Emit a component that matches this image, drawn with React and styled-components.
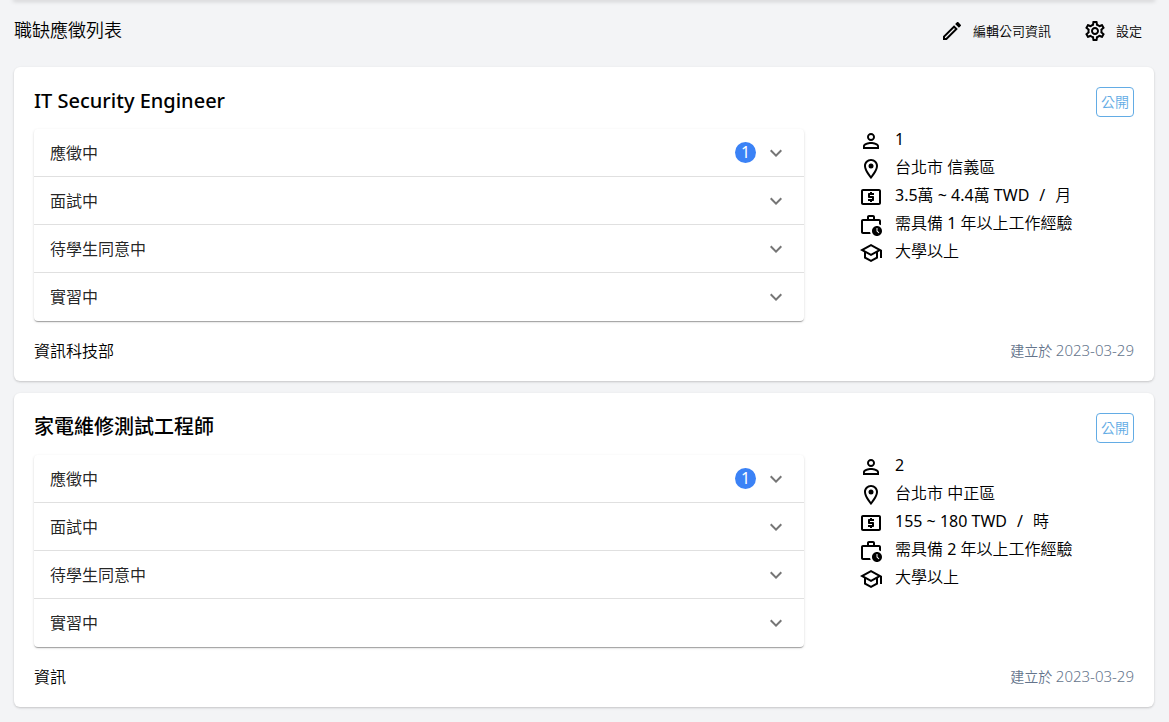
import React from "react";
import styled, { createGlobalStyle } from "styled-components";
import {
  MdOutlineEdit,
  MdOutlineSettings,
  MdOutlinePersonOutline,
  MdOutlineLocationOn,
  MdOutlineLocalAtm,
  MdOutlineWorkHistory,
  MdOutlineSchool,
  MdExpandMore,
} from "react-icons/md";

const GlobalStyle = createGlobalStyle`
  * {
    box-sizing: border-box;
  }
  body {
    margin: 0;
    background: #f3f4f6;
    color: #000;
    font-family: "Noto Sans", "Noto Sans CJK TC", sans-serif;
    font-size: 16px;
    font-weight: 350;
    line-height: 24px;
  }
  h1, h2, p, ul {
    margin: 0;
    padding: 0;
  }
  button {
    border: 0;
    background: none;
    color: inherit;
    font: inherit;
    cursor: pointer;
  }
`;

const Page = styled.main`
  padding: 0 15px 15px 14px;
`;

const NavEdge = styled.div`
  height: 0;
  box-shadow: 0 0 4px 1px rgba(0, 0, 0, 0.25);
`;

const PageHeader = styled.header`
  display: flex;
  align-items: center;
  justify-content: space-between;
  height: 60px;
  margin-bottom: 7px;
  padding-right: 12px;
`;

const PageTitle = styled.h1`
  font-size: 18px;
  font-weight: 350;
`;

const Actions = styled.div`
  display: flex;
  gap: 32px;
`;

const ActionButton = styled.button`
  display: flex;
  align-items: center;
  gap: 9px;
  padding: 2px 0 0;
  font-size: 13px;
`;

const JobList = styled.div`
  display: grid;
  gap: 12px;
`;

const JobCard = styled.article`
  padding: 20px;
  border-radius: 6px;
  background: #fff;
  box-shadow: 0 1px 3px rgba(0, 0, 0, 0.1), 0 1px 2px rgba(0, 0, 0, 0.1);
`;

const JobHeader = styled.div`
  display: flex;
  align-items: flex-start;
  justify-content: space-between;
  margin-bottom: 12px;
`;

const JobTitle = styled.h2`
  font-size: 20px;
  font-weight: 500;
  line-height: 28px;
`;

const StatusButton = styled.button`
  height: 30px;
  padding: 0 4px;
  border: 1px solid #63ace5;
  border-radius: 4px;
  color: #63ace5;
  font-size: 14px;
  line-height: 28px;
`;

const JobBody = styled.div`
  display: grid;
  grid-template-columns: 70% 25%;
  justify-content: space-between;
  align-items: start;
`;

const StageList = styled.div`
  border-radius: 4px;
  background: #fff;
  box-shadow: 0 2px 1px -1px rgba(0, 0, 0, 0.2), 0 1px 1px rgba(0, 0, 0, 0.14),
    0 1px 3px rgba(0, 0, 0, 0.12);
`;

const StageRow = styled.button`
  display: flex;
  align-items: center;
  width: 100%;
  height: 48px;
  padding: 0 16px;
  border-bottom: 1px solid #e0e0e0;
  text-align: left;
  font-weight: 400;
  color: rgba(0, 0, 0, 0.87);

  &:last-child {
    border-bottom-color: transparent;
  }
`;

const StageName = styled.span`
  flex: 1;
`;

const CountBadge = styled.span`
  width: 21px;
  height: 21px;
  margin-right: 8px;
  border-radius: 50%;
  background: #3b82f6;
  color: #fff;
  text-align: center;
  line-height: 21px;
`;

const Chevron = styled(MdExpandMore)`
  color: rgba(0, 0, 0, 0.54);
`;

const FactList = styled.ul`
  display: grid;
  gap: 4px;
  list-style: none;
`;

const Fact = styled.li`
  display: flex;
  gap: 12px;
  height: 24px;
  line-height: 20px;
`;

const Pay = styled.span`
  display: flex;
  gap: 10px;
`;

const Latin = styled.span`
  font-weight: 400;
`;

const JobFooter = styled.footer`
  display: flex;
  align-items: center;
  justify-content: space-between;
  margin-top: 20px;
  line-height: 20px;
`;

const CreatedAt = styled.p`
  color: #64748b;
  font-size: 14px;
`;

const CreatedDate = styled.time`
  font-size: 15px;
  line-height: 16px;
`;

const stages = ["應徵中", "面試中", "待學生同意中", "實習中"];

const jobs = [
  {
    title: "IT Security Engineer",
    department: "資訊科技部",
    applicants: 1,
    openings: "1",
    place: "台北市 信義區",
    pay: "3.5萬 ~ 4.4萬 TWD",
    payUnit: "月",
    experience: "需具備 1 年以上工作經驗",
    degree: "大學以上",
    created: "2023-03-29",
  },
  {
    title: "家電維修測試工程師",
    department: "資訊",
    applicants: 1,
    openings: "2",
    place: "台北市 中正區",
    pay: "155 ~ 180 TWD",
    payUnit: "時",
    experience: "需具備 2 年以上工作經驗",
    degree: "大學以上",
    created: "2023-03-29",
  },
];

// Latin runs get a regular weight beside the lighter Chinese text.
function MixedText({ children }) {
  return (
    <span>
      {children
        .split(/([\x20-\x7e]+)/)
        .map((run, i) => (i % 2 ? <Latin key={i}>{run}</Latin> : run))}
    </span>
  );
}

function Job({ job }) {
  return (
    <JobCard>
      <JobHeader>
        <JobTitle>{job.title}</JobTitle>
        <StatusButton type="button">公開</StatusButton>
      </JobHeader>
      <JobBody>
        <StageList>
          {stages.map((stage, i) => (
            <StageRow key={stage} type="button" aria-expanded="false">
              <StageName>{stage}</StageName>
              {i === 0 && <CountBadge>{job.applicants}</CountBadge>}
              <Chevron size={24} />
            </StageRow>
          ))}
        </StageList>
        <FactList>
          <Fact>
            <MdOutlinePersonOutline size={24} />
            <MixedText>{job.openings}</MixedText>
          </Fact>
          <Fact>
            <MdOutlineLocationOn size={24} />
            <MixedText>{job.place}</MixedText>
          </Fact>
          <Fact>
            <MdOutlineLocalAtm size={24} />
            <Pay>
              <MixedText>{job.pay}</MixedText>
              <Latin>/</Latin>
              <span>{job.payUnit}</span>
            </Pay>
          </Fact>
          <Fact>
            <MdOutlineWorkHistory size={24} />
            <MixedText>{job.experience}</MixedText>
          </Fact>
          <Fact>
            <MdOutlineSchool size={24} />
            <MixedText>{job.degree}</MixedText>
          </Fact>
        </FactList>
      </JobBody>
      <JobFooter>
        <p>{job.department}</p>
        <CreatedAt>
          建立於 <CreatedDate>{job.created}</CreatedDate>
        </CreatedAt>
      </JobFooter>
    </JobCard>
  );
}

export default function App() {
  return (
    <>
      <GlobalStyle />
      <Page>
        <NavEdge />
        <PageHeader>
          <PageTitle>職缺應徵列表</PageTitle>
          <Actions>
            <ActionButton type="button">
              <MdOutlineEdit size={24} />
              編輯公司資訊
            </ActionButton>
            <ActionButton type="button">
              <MdOutlineSettings size={24} />
              設定
            </ActionButton>
          </Actions>
        </PageHeader>
        <JobList>
          {jobs.map((job) => (
            <Job key={job.title} job={job} />
          ))}
        </JobList>
      </Page>
    </>
  );
}
